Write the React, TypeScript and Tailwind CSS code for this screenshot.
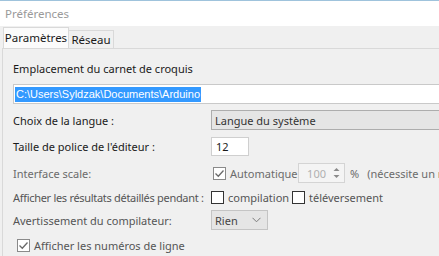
import React from 'react';

const font = { fontFamily: '"Noto Sans", "Open Sans", sans-serif' };

const Check: React.FC<{ checked?: boolean; dim?: boolean }> = ({ checked, dim }) => (
  <span
    className={`flex h-[13px] w-[13px] shrink-0 items-center justify-center border bg-white ${
      dim ? 'border-[#8a8a8a]' : 'border-[#333333]'
    }`}
  >
    {checked && (
      <svg width="11" height="11" viewBox="0 0 11 11">
        <path d="M1.5 5.5 L4.3 8.3 L9.5 2.5" fill="none" stroke={dim ? '#6a6a6a' : '#333'} strokeWidth="1.3" />
      </svg>
    )}
  </span>
);

export default function App() {
  return (
    <div className="flex h-[256px] w-[439px] flex-col overflow-hidden bg-[#f0f0f0] text-[11px] leading-none text-[#1a1a1a]" style={font}>
      {/* title bar */}
      <div className="flex h-[26px] shrink-0 items-center border-t border-[#9fc3dc] bg-white pl-[5px] text-[11.5px] text-[#9a9a9a]">
        Préférences
      </div>

      {/* tabs */}
      <div className="flex h-[22px] items-end pl-[3px]">
        <div className="relative z-10 flex h-[21px] w-[66px] items-center justify-center border border-b-0 border-[#d9d9d9] bg-[#fbfbfb] text-[11.5px] text-[#1a1a1a]">
          Paramètres
        </div>
        <div className="flex h-[18px] w-[45px] items-center justify-center border border-b-0 border-l-0 border-[#d9d9d9] bg-[#f0f0f0] text-[11.5px] text-[#1a1a1a]">
          Réseau
        </div>
      </div>

      {/* panel */}
      <div className="ml-[2px] flex w-[520px] flex-1 flex-col border-l border-t border-[#d9d9d9] bg-[#f0f0f0] pl-[10px] pt-[9px]">
        <div className="flex h-[20px] items-center">Emplacement du carnet de croquis</div>

        <div className="mt-[6px] flex h-[20px] items-center border border-[#c9c9c9] bg-white pl-[1px]">
          <span className="flex h-[15px] items-center bg-[#3399ff] px-[1px] text-[11px] text-white" style={{ fontFamily: '"Liberation Sans", sans-serif' }}>
            C:\Users\Syldzak\Documents\Arduino
          </span>
        </div>

        <div className="mt-[6px] flex h-[20px] items-center">
          <span className="w-[198px] shrink-0">Choix de la langue :</span>
          <div className="flex h-[20px] flex-1 items-center border border-[#adadad] bg-[#e5e5e5] pl-[3px] text-[#333]">
            Langue du système
          </div>
        </div>

        <div className="mt-[7px] flex h-[19px] items-center">
          <span className="w-[198px] shrink-0">Taille de police de l'éditeur :</span>
          <div className="flex h-[19px] w-[38px] items-center border border-[#cfcfcf] bg-white pl-[4px]">12</div>
        </div>

        <div className="mt-[7px] flex h-[20px] items-center text-[#6b6b6b]">
          <span className="w-[200px] shrink-0">Interface scale:</span>
          <Check checked dim />
          <span className="ml-[4px] w-[68px] shrink-0">Automatique</span>
          <div className="flex h-[20px] w-[47px] shrink-0 items-center border border-[#d4d4d4] bg-[#f4f4f4]">
            <span className="flex-1 pr-[6px] text-right text-[#b0b0b0]">100</span>
            <svg width="9" height="14" viewBox="0 0 9 14" className="mr-[3px]">
              <path d="M1.5 5 L4.5 2 L7.5 5 Z" fill="#8a8a8a" />
              <path d="M1.5 9 L4.5 12 L7.5 9 Z" fill="#8a8a8a" />
            </svg>
          </div>
          <span className="ml-[5px]">%</span>
          <span className="ml-[8px] whitespace-nowrap">(nécessite un redémarrage)</span>
        </div>

        <div className="mt-[4px] flex h-[20px] items-center text-[#555]">
          <span className="w-[198px] shrink-0 whitespace-nowrap tracking-[-0.3px]">Afficher les résultats détaillés pendant :</span>
          <Check />
          <span className="ml-[4px] w-[64px] shrink-0">compilation</span>
          <Check />
          <span className="ml-[4px]">téléversement</span>
        </div>

        <div className="mt-[3px] flex h-[20px] items-center text-[#555]">
          <span className="w-[198px] shrink-0">Avertissement du compilateur:</span>
          <div className="flex h-[20px] w-[57px] items-center justify-between border border-[#c4c4c4] bg-[#e5e5e5] pl-[3px] pr-[6px] text-[#444]">
            Rien
            <svg width="9" height="6" viewBox="0 0 9 6">
              <path d="M0.5 0.8 L4.5 4.8 L8.5 0.8" fill="none" stroke="#7a7a7a" strokeWidth="1" />
            </svg>
          </div>
        </div>

        <div className="mt-[5px] flex h-[20px] items-center pl-[4px] text-[#555]">
          <Check checked dim />
          <span className="ml-[4px]">Afficher les numéros de ligne</span>
        </div>
      </div>
    </div>
  );
}
